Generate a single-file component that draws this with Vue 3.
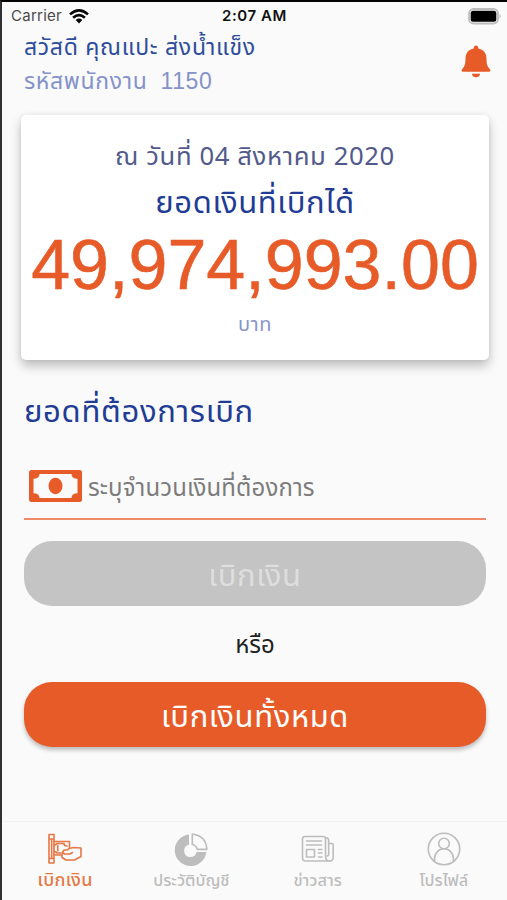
<script setup>
const tabs = [
  { id: 'withdraw', label: 'เบิกเงิน', active: true },
  { id: 'history', label: 'ประวัติบัญชี' },
  { id: 'news', label: 'ข่าวสาร' },
  { id: 'profile', label: 'โปรไฟล์' },
]
</script>

<template>
  <div class="screen">
    <div class="status">
      <div class="carrier">
        <span>Carrier</span>
        <svg width="20" height="15" viewBox="0 0 20 15" fill="none" stroke="#080808" stroke-width="2.6">
          <path d="M1 5.4Q10-2.6 19 5.4M4.1 8.8Q10 3.6 15.9 8.8" />
          <path d="M6.7 10.9Q10 8 13.3 10.9L10 14.4Z" fill="#080808" stroke="none" />
        </svg>
      </div>
      <b class="time">2:07 AM</b>
      <svg class="battery" width="34" height="17" viewBox="0 0 34 17">
        <rect x="1" y="1" width="29" height="14.5" rx="4.5" fill="#fafafa" stroke="#bdbdbd" stroke-width="1.8" />
        <rect x="2.7" y="2.8" width="25.6" height="11" rx="2.5" fill="#000" />
        <path d="M31.5 5.8Q34 8.2 31.5 10.7Z" fill="#bdbdbd" />
      </svg>
    </div>

    <header class="header">
      <div>
        <div class="greeting"><span>สวัสดี คุณแปะ ส่งน้ำแข็ง</span></div>
        <div class="employee"><span class="emp-label">รหัสพนักงาน</span><span class="emp-no">1150</span></div>
      </div>
      <svg class="bell" width="30" height="34" viewBox="0 0 30 34" fill="#e75b29">
        <path d="M15 .5a2.2 2.2 0 0 1 2.2 2.200v.7c5.600 1 8.300 5 8.300 10.100 0 5 .6 7.800 3.400 10.700 1 1.200.6 2.500-.9 2.500H2c-1.500 0-1.900-1.300-.9-2.500 2.800-2.900 3.400-5.700 3.400-10.700 0-5.100 2.700-9.100 8.300-10.100v-.7A2.200 2.200 0 0 1 15 .5Z" />
        <path d="M10.800 28.700h8.400c-.5 2.300-2 3.600-4.200 3.600s-3.700-1.300-4.200-3.600Z" />
      </svg>
    </header>

    <section class="card">
      <div class="date"><span>ณ วันที่ 04 สิงหาคม 2020</span></div>
      <div class="caption"><span>ยอดเงินที่เบิกได้</span></div>
      <div class="amount"><span>49,974,993.00</span></div>
      <div class="unit"><span>บาท</span></div>
    </section>

    <main class="form">
      <h2 class="title"><span>ยอดที่ต้องการเบิก</span></h2>
      <div class="field">
        <svg width="53" height="32" viewBox="0 0 53 32">
          <rect width="53" height="32" rx="2.500" fill="#e75b29" />
          <path d="M10.500 4H42.500Q42.500 8.800 48.500 8.800V23.200Q42.500 23.200 42.500 28H10.500Q10.500 23.200 4.500 23.200V8.800Q10.500 8.800 10.500 4Z" fill="#fafafa" />
          <ellipse cx="26.500" cy="16" rx="7" ry="8.200" fill="#e75b29" />
        </svg>
        <span class="placeholder">ระบุจำนวนเงินที่ต้องการ</span>
      </div>
      <button class="btn disabled"><span>เบิกเงิน</span></button>
      <div class="or"><span>หรือ</span></div>
      <button class="btn primary"><span>เบิกเงินทั้งหมด</span></button>
    </main>

    <nav class="tabs">
      <div v-for="tab in tabs" :key="tab.id" class="tab" :class="[tab.id, { active: tab.active }]">
        <svg class="icon" width="34" height="34" viewBox="0 0 34 34" fill="none" stroke="currentColor" stroke-width="1.600" stroke-linejoin="round" stroke-linecap="round">
          <template v-if="tab.id === 'withdraw'">
            <path d="M1 2.500h5v28.500H1zM1 7h5M1 26.500h5M3.700 8v18" />
            <path d="M6 9.500h15.500v6M6 23h7.500M6 13q2.500 0 2.500-1.500H16q0 2.500 3 2.500M6 19.500q2.500 0 2.500 1.500h4.500M9.800 13.500v5.500" />
            <path d="M21 16.500 25.500 15.500 33 16v8.500L26.500 28H18l-4-2.500v-3.500M21 16.500 19.500 18H16l-1.500 2.500 2 1.500H22l2.500-1.500" />
          </template>
          <template v-else-if="tab.id === 'history'">
            <path d="M15 2.500A15.800 15.800 0 1 0 32.300 20H22.500A6.200 6.200 0 1 1 15 12.800Z" fill="currentColor" stroke="none" />
            <path d="M18.300 2v10.500q4 1 5 4.900h9.500Q32.300 4 18.300 2Z" />
          </template>
          <template v-else-if="tab.id === 'news'">
            <path d="M4 4.500h18.500q2 0 2 2v17.500q0 5 4 5H4.500Q1.500 29 1.500 26V7Q1.500 4.500 4 4.500ZM24.500 5.500q3.200 0 3.200 3V22q0 2-1.700 2" />
            <path d="M27.700 11.500h3q1.500 0 1.500 2v11.500q0 4-3.500 4M5.500 9h15M5.500 13h15M5.500 17.500h8v7.500h-8zM17.500 17.500h3.500M17.500 21h3.500M17.500 25h3.500" />
          </template>
          <template v-else>
            <circle cx="17" cy="17" r="15.700" />
            <circle cx="17" cy="11.500" r="5.300" />
            <path d="M7.500 29V27.500C7.500 21 11.500 16.800 17 16.800S26.500 21 26.500 27.500V29" />
          </template>
        </svg>
        <span class="tab-label">{{ tab.label }}</span>
      </div>
    </nav>
  </div>
</template>

<style>
body { margin: 0; background: #fafafa; }
</style>

<style scoped>
* { box-sizing: border-box; }
.screen {
  display: flex; flex-direction: column; width: 507px; height: 900px; overflow: hidden;
  background: #fafafa; border-left: 2px solid #303033; border-top: 2px solid #050505;
  font-family: "Noto Sans Thai", "Prompt", "Kanit", "Noto Sans", sans-serif;
}
.screen span { white-space: pre; }
.status {
  display: grid; grid-template-columns: 1fr auto 1fr; align-items: center; height: 28px;
  padding: 0 5px 0 9px; font: 15px/28px Inter, sans-serif; color: #4a4a4a;
}
.carrier { display: flex; align-items: center; gap: 7px; letter-spacing: .25px; }
.time { margin-right: 4px; color: #111; font-weight: 600; letter-spacing: .6px; }
.battery { justify-self: end; }
.header { display: flex; justify-content: space-between; height: 85px; padding: 1px 16px 0 22px; }
.bell { margin-top: 14px; }
.greeting { height: 34px; font-size: 23px; line-height: 35px; letter-spacing: .7px; color: #2d4c9c; }
.employee { display: flex; gap: 13px; height: 34px; font-size: 23px; line-height: 34px; letter-spacing: .65px; color: #8492c9; }
.emp-no { font-family: "Liberation Sans", sans-serif; font-size: 23px; line-height: 32px; }
.card {
  height: 245px; margin: 0 18px 0 19px; border-radius: 5px; background: #fff;
  box-shadow: 0 6px 11px rgba(0, 0, 0, .24), 0 0 5px rgba(0, 0, 0, .07);
  display: flex; flex-direction: column; align-items: center; padding-top: 22px;
}
.date { height: 38px; font-size: 25.7px; line-height: 41px; letter-spacing: .6px; color: #525a8c; }
.caption { height: 52px; font-size: 31px; line-height: 57px; letter-spacing: .6px; color: #213c95; }
.amount { height: 76px; font: 70px/76px "Liberation Sans", sans-serif; color: #e75b29; -webkit-text-stroke: .6px #e75b29; }
.unit { height: 42px; font-size: 20px; line-height: 45px; letter-spacing: .6px; color: #8995ca; }
.form { display: flex; flex-direction: column; padding: 24px 21px 0 22px; flex: 1; }
.title { margin: 0; height: 56px; font-size: 31px; line-height: 58px; letter-spacing: .7px; font-weight: 400; color: #213c95; }
.field { display: flex; align-items: center; gap: 6px; height: 80px; padding: 14px 5px 0; border-bottom: 2px solid #ee8a6b; }
.placeholder { padding-top: 5px; font-size: 24px; line-height: 32px; letter-spacing: .15px; color: #7c7c7c; }
.btn { display: flex; align-items: center; justify-content: center; width: 100%; height: 65px; border: 0; border-radius: 28px; padding: 5px 0 0; font-family: inherit; font-size: 31px; letter-spacing: .6px; }
.disabled { margin-top: 21px; background: #c4c4c4; color: #dedede; }
.or { display: flex; justify-content: center; height: 76px; font-size: 24px; line-height: 80px; color: #222; }
.primary { background: #e75b29; color: #fff; box-shadow: 0 3px 4px rgba(0, 0, 0, .25); }
.tabs { display: grid; grid-template-columns: repeat(4, 1fr); height: 79px; border-top: 1px solid #f1f1f1; }
.tab { display: flex; flex-direction: column; align-items: center; padding-top: 10px; color: #bdbdbd; }
.tab.active { color: #e77745; }
.tab-label { font-size: 16.3px; line-height: 30px; font-weight: 500; }
.active .tab-label { font-size: 18px; letter-spacing: .3px; }
</style>
